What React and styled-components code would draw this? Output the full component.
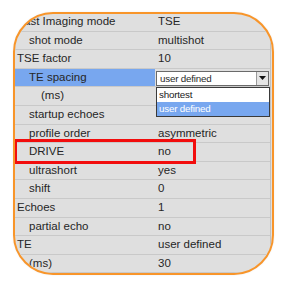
import React from "react";
import styled, { createGlobalStyle } from "styled-components";

const Global = createGlobalStyle`
  html, body { margin: 0; padding: 0; background: #ffffff; }
  body { font-family: "Liberation Sans", Arial, sans-serif; }
`;

const Page = styled.div`
  width: 291px;
  height: 291px;
  padding: 12px 0 0 13px;
  box-sizing: border-box;
  background: #fff;
`;

const Frame = styled.div`
  position: relative;
  width: 261px;
  height: 263px;
  box-sizing: border-box;
  border: 2px solid #f8952a;
  border-radius: 40px;
  overflow: hidden;
  background: #dfdfdf;
  box-shadow: 0 0 2px rgba(0, 0, 0, 0.08);
`;

const Table = styled.div`
  display: flex;
  flex-direction: column;
  margin-top: -1px;
  border-right: 1px solid #c2c2c2;
  margin-right: 1px;
`;

const Row = styled.div`
  display: grid;
  grid-template-columns: 140px 1fr;
  height: 18.6px;
  box-sizing: border-box;
  border-bottom: 1px solid #c9c9c9;
  font-size: 11.5px;
  line-height: 17.6px;
  color: #262626;
`;

const Label = styled.div`
  padding-left: ${(p) => 2 + p.$level * 12}px;
  white-space: nowrap;
  overflow: hidden;
  background: ${(p) => (p.$selected ? "#78a7ef" : "transparent")};
`;

const Value = styled.div`
  padding-left: 3px;
  white-space: nowrap;
  overflow: hidden;
  position: relative;
`;

const Select = styled.div`
  display: flex;
  align-items: stretch;
  width: 113px;
  height: 15px;
  margin: 2px 0 0 1px;
  box-sizing: border-box;
  border: 1px solid #6a6a6a;
  background: #fff;
`;

const SelectText = styled.div`
  flex: 1;
  padding-left: 3px;
  font-size: 9.8px;
  line-height: 13px;
  letter-spacing: -0.2px;
  color: #2a2a2a;
`;

const ArrowButton = styled.div`
  width: 11px;
  display: flex;
  align-items: center;
  justify-content: center;
  background: #e4e4e4;
  border-left: 1px solid #9a9a9a;
`;

const DropList = styled.div`
  position: absolute;
  left: 141px;
  top: 73px;
  width: 114px;
  height: 30px;
  box-sizing: border-box;
  border: 1px solid #3a3a3a;
  background: #fff;
  display: flex;
  flex-direction: column;
`;

const Option = styled.div`
  flex: 1;
  padding-left: 2px;
  font-size: 9.8px;
  line-height: 14px;
  letter-spacing: -0.2px;
  color: ${(p) => (p.$active ? "#ffffff" : "#1a1a1a")};
  background: ${(p) => (p.$active ? "#78a7ef" : "#ffffff")};
`;

const Callout = styled.div`
  position: absolute;
  left: -1px;
  top: 125px;
  width: 182px;
  height: 25px;
  box-sizing: border-box;
  border: 3px solid #f20d0d;
`;

const rows = [
  { label: "Fast Imaging mode", value: "TSE", level: 0 },
  { label: "shot mode", value: "multishot", level: 1 },
  { label: "TSE factor", value: "10", level: 0 },
  { label: "TE spacing", value: "select", level: 1, selected: true },
  { label: "(ms)", value: "", level: 2 },
  { label: "startup echoes", value: "", level: 1 },
  { label: "profile order", value: "asymmetric", level: 1 },
  { label: "DRIVE", value: "no", level: 1 },
  { label: "ultrashort", value: "yes", level: 1 },
  { label: "shift", value: "0", level: 1 },
  { label: "Echoes", value: "1", level: 0 },
  { label: "partial echo", value: "no", level: 1 },
  { label: "TE", value: "user defined", level: 0 },
  { label: "(ms)", value: "30", level: 1 },
];

export default function App() {
  return (
    <Page>
      <Global />
      <Frame>
        <Table>
          {rows.map((r, i) => (
            <Row key={i}>
              <Label $level={r.level} $selected={r.selected}>
                {r.label}
              </Label>
              {r.value === "select" ? (
                <div>
                  <Select>
                    <SelectText>user defined</SelectText>
                    <ArrowButton>
                      <svg width="7" height="4" viewBox="0 0 7 4">
                        <path d="M0 0 L7 0 L3.5 4 Z" fill="#111" />
                      </svg>
                    </ArrowButton>
                  </Select>
                </div>
              ) : (
                <Value>{r.value}</Value>
              )}
            </Row>
          ))}
        </Table>
        <DropList>
          <Option>shortest</Option>
          <Option $active>user defined</Option>
        </DropList>
        <Callout />
      </Frame>
    </Page>
  );
}
